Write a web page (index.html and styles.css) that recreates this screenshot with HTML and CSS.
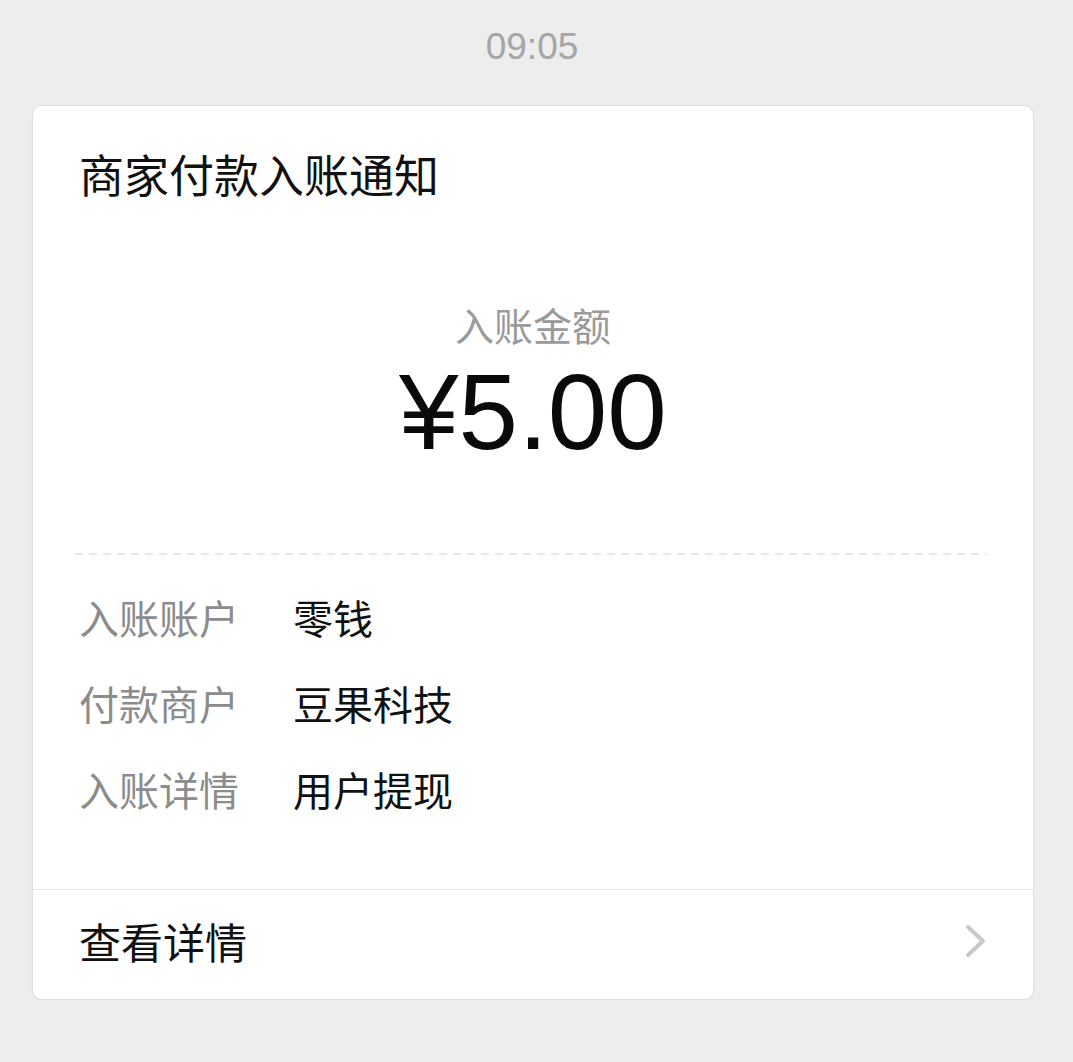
FILE: index.html
```html
<!DOCTYPE html>
<html lang="zh-CN">
<head>
    <meta charset="UTF-8">
    <meta name="viewport" content="width=device-width, initial-scale=1.0">
    <title>商家付款入账通知</title>
    <link rel="stylesheet" href="styles.css">
</head>
<body>
    <div class="time">09:05</div>
    <div class="card">
        <div class="card-title">商家付款入账通知</div>
        <div class="amount-label">入账金额</div>
        <div class="amount">¥5.00</div>
        <div class="dashed"></div>
        <div class="rows">
            <div class="row">
                <span class="label">入账账户</span>
                <span class="value">零钱</span>
            </div>
            <div class="row">
                <span class="label">付款商户</span>
                <span class="value">豆果科技</span>
            </div>
            <div class="row">
                <span class="label">入账详情</span>
                <span class="value">用户提现</span>
            </div>
        </div>
        <div class="footer">
            <span>查看详情</span>
            <svg class="arrow" width="22" height="34" viewBox="0 0 22 34">
                <polyline points="3,3 18,17 3,31" fill="none" stroke="#c8c8c8" stroke-width="4" stroke-linecap="round" stroke-linejoin="round"/>
            </svg>
        </div>
    </div>
</body>
</html>
```

FILE: styles.css
```css
body {
    margin: 0;
    background-color: #ededed;
    font-family: "Liberation Sans", "Noto Sans CJK SC", sans-serif;
    color: #111;
}
.time {
    padding: 26px 9px 0 0;
    line-height: 42px;
    font-size: 37px;
    text-align: center;
    color: #a6a6a6;
    margin-bottom: 37px;
}
.card {
    margin-left: 32px;
    width: 1002px;
    box-sizing: border-box;
    background-color: white;
    border: 1px solid #e0e0e0;
    border-radius: 10px;
    box-shadow: 0 1px 2px rgba(0,0,0,0.04);
}
.card-title {
    padding: 41px 46px 0;
    font-size: 45px;
    line-height: 62px;
}
.amount-label {
    margin-top: 91px;
    text-align: center;
    font-size: 39px;
    line-height: 56px;
    color: #9a9a9a;
}
.amount {
    margin-top: 1px;
    text-align: center;
    font-size: 107px;
    line-height: 110px;
    color: #0a0a0a;
}
.dashed {
    margin: 86px 46px 0 42px;
    height: 2px;
    background-image: repeating-linear-gradient(to right, #e8e8e8 0, #e8e8e8 8px, transparent 8px, transparent 14px);
}
.rows {
    padding: 22px 46px 54px;
}
.row {
    display: flex;
    line-height: 86px;
    font-size: 40px;
}
.label {
    width: 214px;
    color: #8c8c8c;
}
.value {
    color: #111;
}
.footer {
    border-top: 1px solid #e6e6e6;
    height: 110px;
    padding: 0 46px 8px 46px;
    box-sizing: border-box;
    display: flex;
    align-items: center;
    justify-content: space-between;
    font-size: 42px;
}
.arrow {
    display: block;
}
```
